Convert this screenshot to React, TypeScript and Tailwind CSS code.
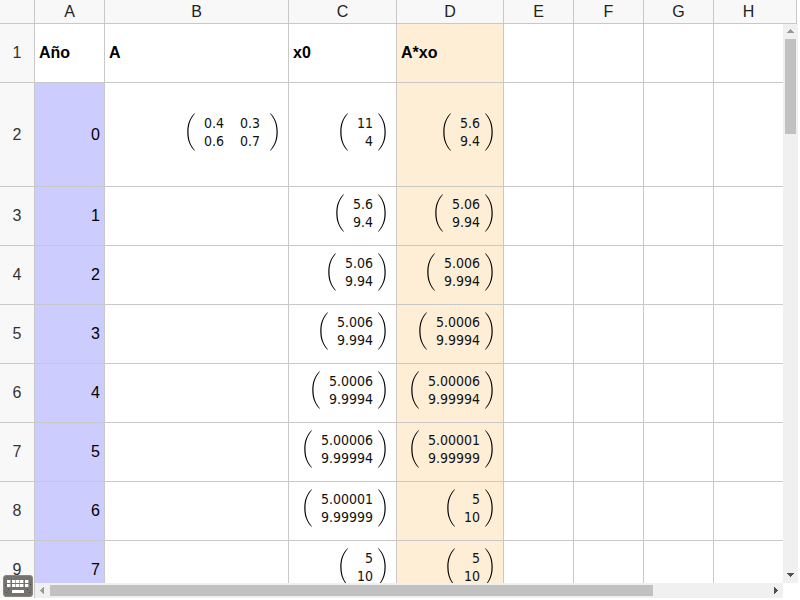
import type { ReactNode } from "react";

type Matrix = string[][];

interface Row {
  year: string;
  a?: Matrix;
  x0: Matrix;
  ax: Matrix;
}

const COLUMNS = ["A", "B", "C", "D", "E", "F", "G", "H"];
const EMPTY_COLUMNS = ["E", "F", "G", "H"];

const col = (...values: string[]): Matrix => values.map(v => [v]);

const ROWS: Row[] = [
  { year: "0", a: [["0.4", "0.3"], ["0.6", "0.7"]], x0: col("11", "4"), ax: col("5.6", "9.4") },
  { year: "1", x0: col("5.6", "9.4"), ax: col("5.06", "9.94") },
  { year: "2", x0: col("5.06", "9.94"), ax: col("5.006", "9.994") },
  { year: "3", x0: col("5.006", "9.994"), ax: col("5.0006", "9.9994") },
  { year: "4", x0: col("5.0006", "9.9994"), ax: col("5.00006", "9.99994") },
  { year: "5", x0: col("5.00006", "9.99994"), ax: col("5.00001", "9.99999") },
  { year: "6", x0: col("5.00001", "9.99999"), ax: col("5", "10") },
  { year: "7", x0: col("5", "10"), ax: col("5", "10") },
];

function Columns() {
  return (
    <colgroup>
      <col className="w-[35px]" />
      <col className="w-[70px]" />
      <col className="w-[184px]" />
      <col className="w-[108px]" />
      <col className="w-[107px]" />
      <col className="w-[70px]" />
      <col className="w-[70px]" />
      <col className="w-[70px]" />
      <col />
    </colgroup>
  );
}

function Paren({ right = false }: { right?: boolean }) {
  return (
    <svg width="8" height="38" viewBox="0 0 8 38" className={right ? "rotate-180" : ""} aria-hidden="true">
      <path d="M7.6 0.2C2.6 5 0.3 11 0.3 19S2.6 33 7.6 37.8L8 37.5C3.6 32.4 1.5 27 1.5 19S3.6 5.6 8 0.5Z" fill="#000" />
    </svg>
  );
}

function MatrixView({ value }: { value: Matrix }) {
  const wide = value[0].length > 1;
  return (
    <div className="flex items-center justify-end pr-[10px] pb-[6px]">
      <Paren />
      <div className={`flex gap-4 pl-[9px] text-right font-['DejaVu_Sans_Condensed','Noto_Sans',sans-serif] text-sm leading-[18px] text-[#111] ${wide ? "pr-[10px]" : "pr-[5px]"}`}>
        {value[0].map((_, c) => (
          <div key={c}>
            {value.map((line, r) => <div key={r}>{line[c]}</div>)}
          </div>
        ))}
      </div>
      <Paren right />
    </div>
  );
}

function Cell({ className = "", children }: { className?: string; children?: ReactNode }) {
  return <td className={`border-r border-b border-[#c8c8c8] p-0 align-middle ${className}`}>{children}</td>;
}

function RowHead({ children }: { children: ReactNode }) {
  return (
    <th scope="row" className="border-r border-b border-[#c8c8c8] bg-[#f8f8f8] p-0 text-center align-middle font-normal text-[#333]">
      {children}
    </th>
  );
}

function ArrowButton({ label, points, color, className }: { label: string; points: string; color: string; className: string }) {
  return (
    <button type="button" aria-label={label} className={`flex shrink-0 items-center justify-center ${className}`}>
      <svg width="7" height="7" viewBox="0 0 7 7" shapeRendering="crispEdges" aria-hidden="true">
        <polygon points={points} fill={color} />
      </svg>
    </button>
  );
}

function KeyboardIcon() {
  return (
    <svg width="30" height="22" viewBox="0 0 30 22" aria-hidden="true">
      <rect x="0.5" y="0.5" width="29" height="21" rx="2.5" fill="#74726e" stroke="#8a867d" />
      {[5, 9].map(y => (
        [4, 9, 13, 17, 22].map(x => <rect key={`${x}-${y}`} x={x} y={y} width="3.4" height="3" fill="#fff" />)
      ))}
      <rect x="9" y="15" width="12" height="3" fill="#fff" />
      <g fill="#4d4b48">
        <rect x="2" y="10" width="1" height="1" />
        <rect x="5" y="14" width="1" height="1" />
        <rect x="3" y="17" width="1" height="1" />
        <rect x="24" y="14" width="1" height="1" />
        <rect x="26" y="17" width="1" height="1" />
        <rect x="27" y="9" width="1" height="1" />
      </g>
    </svg>
  );
}

export default function App() {
  return (
    <div className="flex h-screen flex-col overflow-hidden bg-white pr-0.5 pb-0.5 font-['Liberation_Sans',Arial,sans-serif] text-base text-black">
      {/* Column letters */}
      <div className="mr-px shrink-0 overflow-hidden border-r border-b border-[#c8c8c8] bg-[#f8f8f8]">
        <div className="pr-3">
          <table className="w-full min-w-[784px] table-fixed border-separate border-spacing-0">
            <Columns />
            <thead>
              <tr className="h-[23px] leading-[23px] text-[#222]">
                <th className="border-r border-[#c8c8c8] p-0" />
                {COLUMNS.map(name => (
                  <th key={name} scope="col" className="border-r border-[#c8c8c8] p-0 text-center font-normal last:border-transparent">
                    {name}
                  </th>
                ))}
              </tr>
            </thead>
          </table>
        </div>
      </div>

      {/* Cells and vertical scrollbar */}
      <div className="flex min-h-0 flex-1">
        <div className="min-w-0 flex-1 overflow-hidden">
          <table className="w-full min-w-[784px] table-fixed border-separate border-spacing-0">
            <Columns />
            <tbody>
              <tr className="h-[59px]">
                <RowHead>1</RowHead>
                <Cell className="pl-1 font-bold">Año</Cell>
                <Cell className="pl-1 font-bold">A</Cell>
                <Cell className="pl-1 font-bold">x0</Cell>
                <Cell className="bg-[#ffeed6] pl-1 font-bold">A*xo</Cell>
                {EMPTY_COLUMNS.map(name => <Cell key={name} />)}
              </tr>
              {ROWS.map((row, i) => (
                <tr key={row.year} className={row.a ? "h-[104px]" : "h-[59px]"}>
                  <RowHead>{i + 2}</RowHead>
                  <Cell className="bg-[#ccccff] pr-1 text-right">{row.year}</Cell>
                  <Cell>{row.a && <MatrixView value={row.a} />}</Cell>
                  <Cell><MatrixView value={row.x0} /></Cell>
                  <Cell className="bg-[#ffeed6]"><MatrixView value={row.ax} /></Cell>
                  {EMPTY_COLUMNS.map(name => <Cell key={name} />)}
                </tr>
              ))}
            </tbody>
          </table>
        </div>
        <div className="flex w-[15px] shrink-0 flex-col bg-[#f0f0f0]">
          <ArrowButton label="Arriba" points="0,5 3.5,1 7,5" color="#999" className="h-[15px]" />
          <div className="min-h-0 flex-1 px-0.5">
            <div className="h-[18%] bg-[#c1c1c1]" />
          </div>
          <ArrowButton label="Abajo" points="0,1 7,1 3.5,5" color="#505050" className="h-[15px]" />
        </div>
      </div>

      {/* Keyboard toggle and horizontal scrollbar */}
      <div className="flex h-[15px] shrink-0">
        <div className="relative w-[35px] shrink-0 border-r border-[#c8c8c8] bg-[#f8f8f8]">
          <button type="button" aria-label="Teclado" className="absolute bottom-px left-[3px]">
            <KeyboardIcon />
          </button>
        </div>
        <div className="flex min-w-0 flex-1 bg-[#f0f0f0]">
          <ArrowButton label="Izquierda" points="5,0 1,3.5 5,7" color="#999" className="w-[15px]" />
          <div className="min-w-0 flex-1 py-0.5">
            <div className="h-full w-[84%] bg-[#c1c1c1]" />
          </div>
          <ArrowButton label="Derecha" points="2,0 6,3.5 2,7" color="#505050" className="w-[15px]" />
        </div>
        <div className="w-[15px] shrink-0" />
      </div>
    </div>
  );
}
